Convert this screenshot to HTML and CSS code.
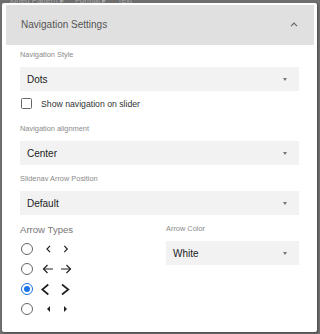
FILE: index.html
```html
<!DOCTYPE html>
<html>
<head>
<meta charset="utf-8">
<link rel="stylesheet" href="styles.css">
</head>
<body>
<div class="topstrip">ioned Pattern ▸ &nbsp; &nbsp; Format ▸ &nbsp; &nbsp; Text</div>
<div class="panel">
  <div class="header">
    <span class="title">Navigation Settings</span>
    <svg class="chev" width="8" height="5" viewBox="0 0 8 5"><polyline points="1,4.2 4,1.2 7,4.2" fill="none" stroke="#666" stroke-width="1.2"/></svg>
  </div>
  <div class="content">
    <div class="label first">Navigation Style</div>
    <div class="select"><span>Dots</span><span class="caret"></span></div>
    <label class="check"><span class="box"></span><span>Show navigation on slider</span></label>
    <div class="label l2">Navigation alignment</div>
    <div class="select"><span>Center</span><span class="caret"></span></div>
    <div class="label l3">Slidenav Arrow Position</div>
    <div class="select"><span>Default</span><span class="caret"></span></div>
    <div class="bottom">
      <div class="types">
        <div class="types-title">Arrow Types</div>
        <div class="row">
          <span class="radio"></span>
          <svg width="36" height="20" viewBox="0 0 36 20"><polyline points="12,6.8 9,10 12,13.2" fill="none" stroke="#222" stroke-width="1.2"/><polyline points="26.3,6.8 29.3,10 26.3,13.2" fill="none" stroke="#222" stroke-width="1.2"/></svg>
        </div>
        <div class="row">
          <span class="radio"></span>
          <svg width="36" height="20" viewBox="0 0 36 20"><g fill="none" stroke="#222" stroke-width="1.2"><line x1="5.5" y1="10" x2="15" y2="10"/><polyline points="9.5,6 5.5,10 9.5,14"/><line x1="23" y1="10" x2="32.5" y2="10"/><polyline points="28.5,6 32.5,10 28.5,14"/></g></svg>
        </div>
        <div class="row">
          <span class="radio on"></span>
          <svg width="36" height="20" viewBox="0 0 36 20"><g fill="none" stroke="#222" stroke-width="1.7"><polyline points="10.3,5.5 4.3,10.5 10.3,15.5"/><polyline points="24,5.5 30.3,10.5 24,15.5"/></g></svg>
        </div>
        <div class="row">
          <span class="radio"></span>
          <svg width="36" height="20" viewBox="0 0 36 20"><g fill="#222"><polygon points="12,7 9,10 12,13"/><polygon points="26,7 29,10 26,13"/></g></svg>
        </div>
      </div>
      <div class="color">
        <div class="label">Arrow Color</div>
        <div class="select"><span>White</span><span class="caret"></span></div>
      </div>
    </div>
  </div>
</div>
</body>
</html>
```
FILE: styles.css
```css
html, body {
  margin: 0;
  padding: 0;
}
body {
  background: #6e6e6e;
  font-family: "Liberation Sans", Arial, sans-serif;
  width: 320px;
  height: 334px;
  overflow: hidden;
}
.topstrip {
  height: 3px;
  overflow: hidden;
  font-size: 8px;
  line-height: 1px;
  color: #a8a8a8;
  padding-left: 10px;
  white-space: nowrap;
}
.panel {
  margin-left: 2px;
  width: 315px;
  height: 329px;
  background: #fff;
  border-radius: 2px;
  box-shadow: 1px 1px 2px rgba(0,0,0,0.35);
  box-sizing: border-box;
  overflow: hidden;
}
.header {
  margin: 2px 3px 0 4px;
  height: 40px;
  background: #e0e0e0;
  display: flex;
  align-items: center;
  justify-content: space-between;
  padding: 0 16px 0 15px;
}
.title {
  font-size: 10px;
  color: #555;
  line-height: 12px;
}
.chev {
  display: block;
  margin-top: -1px;
}
.content {
  padding: 0 18px;
}
.label {
  font-size: 7.4px;
  line-height: 10px;
  color: #8a8a8a;
  margin-bottom: 7px;
}
.label.first { margin-top: 5px; }
.label.l2 { margin-top: 15px; }
.label.l3 { margin-top: 9px; }
.select {
  height: 24px;
  background: #f2f2f2;
  display: flex;
  align-items: center;
  justify-content: space-between;
  padding: 0 12px 0 7px;
  font-size: 10px;
  color: #222;
}
.caret {
  width: 0;
  height: 0;
  border-left: 2.5px solid transparent;
  border-right: 2.5px solid transparent;
  border-top: 3px solid #777;
}
.check {
  display: flex;
  align-items: center;
  margin-top: 7px;
  height: 11px;
  font-size: 8.7px;
  color: #333;
}
.box {
  width: 11px;
  height: 11px;
  box-sizing: border-box;
  border: 1.3px solid #666;
  border-radius: 1.5px;
  margin-left: 1px;
  margin-right: 9px;
}
.bottom {
  display: grid;
  grid-template-columns: 146px 133px;
  margin-top: 9px;
}
.types-title {
  font-size: 9.6px;
  line-height: 12px;
  color: #777;
  margin-bottom: 3px;
}
.row {
  display: flex;
  align-items: center;
  height: 20px;
}
.row svg {
  display: block;
  margin-left: 5px;
}
.radio {
  width: 12px;
  height: 12px;
  box-sizing: border-box;
  border: 1.3px solid #666;
  border-radius: 50%;
  margin-left: 1px;
  position: relative;
}
.radio.on {
  border-color: #1a73e8;
  display: flex;
  align-items: center;
  justify-content: center;
}
.radio.on::after {
  content: "";
  width: 6px;
  height: 6px;
  border-radius: 50%;
  background: #1a73e8;
}
```
